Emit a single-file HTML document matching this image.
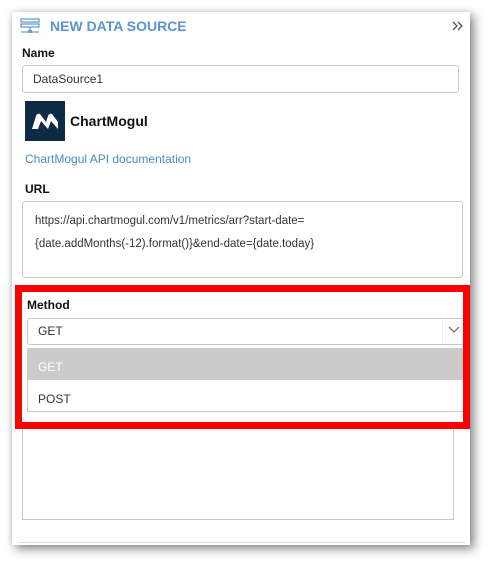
<!DOCTYPE html>
<html><head><style>
body{margin:0;width:490px;height:565px;background:#fff;font-family:"Liberation Sans",sans-serif;position:relative;overflow:hidden}
.a{position:absolute}
.panel{left:12px;top:12px;width:458px;height:533px;background:#fff;box-shadow:4px 4px 10px rgba(0,0,0,.45),0 0 6px rgba(0,0,0,.15)}
.lbl{font-size:12px;font-weight:bold;color:#111}
.box{border:1px solid #c8c8c8;border-radius:3px;background:#fff;box-sizing:border-box}
.t{font-size:12px;color:#333}
</style></head><body>
<div class="a panel"></div>
<svg class="a" style="left:20px;top:18px" width="20" height="17" viewBox="0 0 20 17"><g fill="none" stroke="#6a9bd1" stroke-width="1.3"><rect x="1" y="1" width="18" height="3"/><rect x="1" y="6" width="18" height="3"/><path d="M10 9v4M1 14h18"/></g><rect x="8" y="12" width="4" height="3" fill="#6a9bd1"/></svg>
<div class="a" style="left:50px;top:18px;font-size:14px;font-weight:bold;color:#5b93d1">NEW DATA SOURCE</div>
<svg class="a" style="left:452px;top:21px" width="12" height="10"><path d="M1 1l4 4-4 4M6 1l4 4-4 4" fill="none" stroke="#555" stroke-width="1.3"/></svg>
<div class="a lbl" style="left:22px;top:46px">Name</div>
<div class="a box" style="left:22px;top:65px;width:437px;height:28px"></div>
<div class="a t" style="left:33px;top:72px">DataSource1</div>
<div class="a" style="left:25px;top:101px;width:40px;height:40px;background:#0e2a45"></div>
<svg class="a" style="left:25px;top:101px" width="40" height="40"><path d="M7 28 L11 15 Q12 12 15 13 L21 21 L23 15 Q24 12 27 13 L33 21 V28 L26 20 L23 28 L16 20 L13 28 Z" fill="#fff"/></svg>
<div class="a" style="left:70px;top:113px;font-size:14px;font-weight:bold;color:#111">ChartMogul</div>
<div class="a" style="left:25px;top:152px;font-size:12px;color:#4a8cc8">ChartMogul API documentation</div>
<div class="a lbl" style="left:25px;top:182px">URL</div>
<div class="a box" style="left:22px;top:201px;width:441px;height:77px"></div>
<div class="a t" style="left:35px;top:210px;line-height:23px;font-size:11.5px">https://api.chartmogul.com/v1/metrics/arr?start-date=<br>{date.addMonths(-12).format()}&amp;end-date={date.today}</div>
<div class="a" style="left:25px;top:368px;width:2px;height:11px;background:#333"></div>
<div class="a box" style="left:22px;top:383px;width:432px;height:137px;border-radius:0"></div>
<div class="a" style="left:18px;top:542px;width:447px;height:1px;background:#ddd"></div>
<div class="a" style="left:15px;top:285px;width:455px;height:144px;background:#fff"></div>
<div class="a lbl" style="left:27px;top:298px">Method</div>
<div class="a box" style="left:27px;top:318px;width:441px;height:27px"></div>
<div class="a" style="left:442px;top:319px;width:1px;height:25px;background:#eee"></div>
<svg class="a" style="left:448px;top:326px" width="12" height="8"><path d="M1 1l5 5 5-5" fill="none" stroke="#666" stroke-width="1.2"/></svg>
<div class="a t" style="left:38px;top:324px">GET</div>
<div class="a" style="left:27px;top:348px;width:441px;height:64px;border:1px solid #ccc;box-sizing:border-box;background:#fff"></div>
<div class="a" style="left:28px;top:349px;width:440px;height:31px;background:#cbcbcb"></div>
<div class="a" style="left:38px;top:360px;font-size:12px;color:#fff">GET</div>
<div class="a t" style="left:38px;top:392px">POST</div>
<div class="a" style="left:15px;top:285px;width:455px;height:144px;box-sizing:border-box;border:7px solid #f00"></div>
</body></html>
